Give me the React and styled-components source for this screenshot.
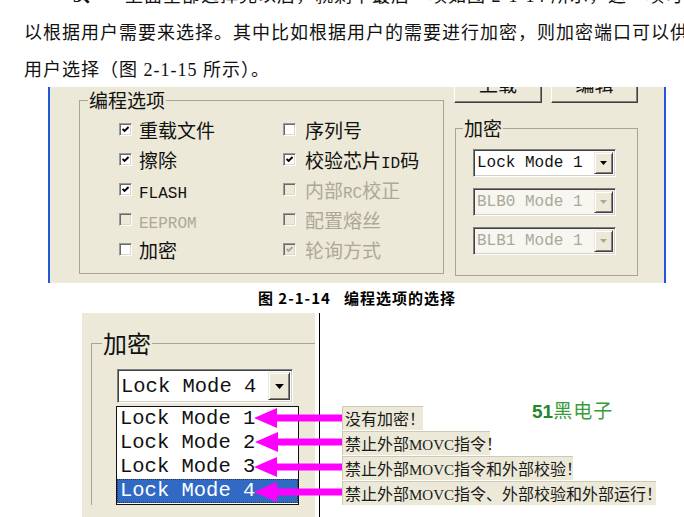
import React from 'react';
import styled, { createGlobalStyle, css } from 'styled-components';

const GlobalStyle = createGlobalStyle`
  html, body { margin: 0; padding: 0; background: #fff; }
  body {
    width: 684px;
    height: 517px;
    overflow: hidden;
    font-family: "Noto Sans CJK SC", sans-serif;
  }
`;

const BEIGE = '#ECE9D8';
const DISABLED = '#ACA899';

const Page = styled.div`
  width: 684px;
  height: 517px;
  overflow: hidden;
  position: relative;
  background: #fff;
  display: flex;
  flex-direction: column;
`;

/* ---------- prose ---------- */
const Prose = styled.div`
  margin-top: -22px;
  font-family: "Liberation Serif", "Noto Sans CJK SC", serif;
  font-size: 18px;
  letter-spacing: 1px;
  color: #111;
`;

const ProseLine = styled.div`
  height: 37px;
  line-height: 37px;
  white-space: nowrap;
  padding-left: 24px;
`;

const ItemNo = styled.span`
  display: inline-block;
  width: 52px;
  margin-left: 49px;
  font-weight: 700;
`;

/* ---------- screenshot 1 ---------- */
const Shot1 = styled.div`
  margin-top: -2px;
  margin-left: 48px;
  width: 618px;
  height: 196px;
  flex: none;
  box-sizing: border-box;
  background: ${BEIGE};
  border-left: 2px solid #2456d8;
  border-right: 2px solid #2456d8;
  display: flex;
  align-items: flex-start;
  gap: 10px;
  padding-left: 29px;
  overflow: hidden;
`;

const Group = styled.fieldset`
  margin: ${p => p.$mt || 0}px 0 0 ${p => p.$ml || 0}px;
  padding: 0;
  min-width: 0;
  flex: none;
  width: ${p => p.$w}px;
  box-sizing: border-box;
  border: 1px solid #a9a594;
  ${p => p.$open && css`
    border-right: none;
    border-bottom: none;
  `}
`;

const Legend = styled.legend`
  margin-left: ${p => p.$ml}px;
  padding: 0 1px;
  font-family: "Noto Sans CJK SC", sans-serif;
  font-size: ${p => p.$fs}px;
  line-height: ${p => p.$lh}px;
  color: #111;
`;

const OptionGrid = styled.div`
  display: grid;
  grid-template-columns: 164px 1fr;
  grid-auto-rows: 30px;
  padding: 4px 0 9px 39px;
`;

const OptionRow = styled.div`
  display: flex;
  align-items: center;
  gap: ${p => p.$gap}px;
  font-size: 19px;
  white-space: nowrap;
  color: ${p => (p.$disabled ? DISABLED : '#111')};
`;

const Latin = styled.span`
  font-family: "Liberation Mono", monospace;
  font-size: 16px;
`;

const CheckBox = styled.span`
  width: 13px;
  height: 13px;
  flex: none;
  box-sizing: border-box;
  border: 1px solid;
  border-color: #9a9a9a #fff #fff #9a9a9a;
  box-shadow: inset 1px 1px 0 #6a6a6a, inset -1px -1px 0 #dcd8c8;
  background: ${p => (p.$disabled ? BEIGE : '#fff')};
  display: flex;
  align-items: center;
  justify-content: center;
`;

const RightCol = styled.div`
  display: flex;
  flex-direction: column;
  width: 184px;
  flex: none;
`;

const ButtonRow = styled.div`
  display: flex;
  gap: 9px;
  margin-top: -20px;
`;

const PushButton = styled.div`
  width: ${p => p.$w}px;
  height: 36px;
  box-sizing: border-box;
  border: 1px solid;
  border-color: #fff #404040 #404040 #fff;
  box-shadow: inset -1px -1px 0 #808080;
  background: ${BEIGE};
  display: flex;
  align-items: center;
  justify-content: center;
  padding-bottom: 3px;
  font-size: 19px;
  color: #111;
`;

const ComboStack = styled.div`
  display: flex;
  flex-direction: column;
  gap: 11px;
  padding: 11px 0 20px 17px;
`;

const ComboBox = styled.div`
  display: flex;
  width: ${p => p.$w}px;
  height: ${p => p.$h}px;
  box-sizing: border-box;
  border: 1px solid;
  border-color: #808080 #fff #fff #808080;
  box-shadow: inset 1px 1px 0 #404040, inset -1px -1px 0 #d4d0c8;
  background: ${p => (p.$disabled ? '#f7f6f1' : '#fff')};
  padding: 2px;
`;

const ComboText = styled.div`
  flex: 1;
  display: flex;
  align-items: center;
  padding-left: ${p => p.$pl}px;
  font-family: "Liberation Mono", monospace;
  font-size: ${p => p.$fs}px;
  white-space: nowrap;
  overflow: hidden;
  color: ${p => (p.$disabled ? DISABLED : '#111')};
`;

const ComboButton = styled.div`
  width: ${p => p.$bw}px;
  flex: none;
  box-sizing: border-box;
  background: ${BEIGE};
  border: 1px solid;
  border-color: ${BEIGE} #404040 #404040 ${BEIGE};
  box-shadow: inset 1px 1px 0 #fff, inset -1px -1px 0 #808080;
  display: flex;
  align-items: center;
  justify-content: center;
`;

/* ---------- caption ---------- */
const Caption = styled.div`
  height: 30px;
  flex: none;
  line-height: 30px;
  text-align: center;
  padding-left: 30px;
  font-family: "Noto Sans CJK SC", sans-serif;
  font-weight: 700;
  font-size: 15px;
  letter-spacing: 1px;
  white-space: pre;
  color: #000;
`;

/* ---------- screenshot 2 ---------- */
const Bottom = styled.div`
  position: relative;
  display: flex;
  height: 204px;
  flex: none;
`;

const Shot2Frame = styled.div`
  margin-left: 82px;
  display: flex;
  padding-right: 4px;
  border-right: 1px solid #000;
`;

const Shot2 = styled.div`
  width: 233px;
  background: ${BEIGE};
  overflow: hidden;
`;

const BigStack = styled.div`
  display: flex;
  flex-direction: column;
  padding: 13px 0 0 25px;
`;

const DropList = styled.div`
  width: 183px;
  margin: 3px 0 0 -1px;
  box-sizing: border-box;
  border: 1px solid #111;
  background: #fff;
  padding-bottom: 1px;
`;

const ListItem = styled.div`
  height: 24px;
  line-height: 24px;
  padding-left: 3px;
  font-family: "Liberation Mono", monospace;
  font-size: 20.5px;
  color: #111;
  white-space: nowrap;
  ${p => p.$selected && css`
    background: #316AC5;
    color: #fff;
    outline: 1px dotted #333;
    outline-offset: -1px;
  `}
`;

const Notes = styled.div`
  display: grid;
  grid-template-columns: 190px auto;
  grid-auto-rows: 24px;
  row-gap: 1px;
  align-content: start;
  padding-top: 93px;
  margin-left: 22px;
`;

const Note = styled.div`
  grid-column: ${p => (p.$full ? '1 / -1' : 'auto')};
  width: ${p => p.$w}px;
  box-sizing: border-box;
  background: ${BEIGE};
  border-top: 1px solid #cdc9b6;
  border-left: 1px solid #cdc9b6;
  padding-left: 2px;
  font-family: "Noto Sans CJK SC", sans-serif;
  font-size: 16px;
  line-height: 23px;
  white-space: nowrap;
  color: #1a1a1a;
`;

const NoteLatin = styled.span`
  font-family: "Liberation Serif", serif;
  font-size: 15px;
`;

const Brand = styled.div`
  align-self: start;
  margin-top: -6px;
  line-height: 20px;
  font-size: 19px;
  white-space: nowrap;
`;

const BrandNum = styled.span`
  font-family: "Liberation Sans", sans-serif;
  font-weight: 700;
  color: #23862a;
`;

const BrandText = styled.span`
  font-family: "Noto Sans CJK SC", sans-serif;
  color: #3b9b3b;
  letter-spacing: 1px;
`;

const ArrowLayer = styled.svg`
  position: absolute;
  left: 250px;
  top: 0;
  pointer-events: none;
`;

/* ---------- pieces ---------- */
function Check({ color }) {
  return (
    <svg width="7" height="7" viewBox="0 0 7 7">
      <path d="M0.6 3 L2.6 5 L6.6 1" fill="none" stroke={color} strokeWidth="1.9" />
    </svg>
  );
}

function Option({ children, checked, disabled, gap = 7 }) {
  return (
    <OptionRow $disabled={disabled} $gap={gap}>
      <CheckBox $disabled={disabled}>{checked && <Check color={disabled ? DISABLED : '#000'} />}</CheckBox>
      <span>{children}</span>
    </OptionRow>
  );
}

function DownArrow({ color, w = 7, h = 4 }) {
  return (
    <svg width={w} height={h} viewBox="0 0 7 4">
      <polygon points="0,0 7,0 3.5,4" fill={color} />
    </svg>
  );
}

function Combo({ text, disabled, w, h, fs, bw, pl }) {
  return (
    <ComboBox $w={w} $h={h} $disabled={disabled}>
      <ComboText $fs={fs} $pl={pl} $disabled={disabled}>{text}</ComboText>
      <ComboButton $bw={bw}>
        <DownArrow color={disabled ? DISABLED : '#000'} w={bw > 20 ? 9 : 7} h={bw > 20 ? 5 : 4} />
      </ComboButton>
    </ComboBox>
  );
}

function Arrow({ cy, tip }) {
  const back = tip + 23;
  const end = 92;
  return (
    <polygon
      points={`${tip},${cy} ${back},${cy - 10} ${back},${cy - 3.5} ${end},${cy - 3.5} ${end},${cy + 3.5} ${back},${cy + 3.5} ${back},${cy + 10}`}
      fill="#FF00FF"
    />
  );
}

export default function App() {
  return (
    <Page>
      <GlobalStyle />
      <Prose>
        <ProseLine>
          <ItemNo>3、</ItemNo>上面全部选择完以后，就剩下最后一项如图 2-1-14 所示，这一项可
        </ProseLine>
        <ProseLine>以根据用户需要来选择。其中比如根据用户的需要进行加密，则加密端口可以供</ProseLine>
        <ProseLine>用户选择（图 2-1-15 所示）。</ProseLine>
      </Prose>

      <Shot1>
        <Group $w={365} $mt={3}>
          <Legend $ml={8} $fs={19} $lh={20}>编程选项</Legend>
          <OptionGrid>
            <Option checked>重载文件</Option>
            <Option gap={9}>序列号</Option>
            <Option checked>擦除</Option>
            <Option checked gap={9}>校验芯片<Latin>ID</Latin>码</Option>
            <Option checked><Latin>FLASH</Latin></Option>
            <Option disabled gap={9}>内部<Latin>RC</Latin>校正</Option>
            <Option disabled><Latin>EEPROM</Latin></Option>
            <Option disabled gap={9}>配置熔丝</Option>
            <Option>加密</Option>
            <Option checked disabled gap={9}>轮询方式</Option>
          </OptionGrid>
        </Group>

        <RightCol>
          <ButtonRow>
            <PushButton $w={88}>上载</PushButton>
            <PushButton $w={87}>编辑</PushButton>
          </ButtonRow>
          <Group $w={183} $mt={15} $ml={1}>
            <Legend $ml={7} $fs={19} $lh={20}>加密</Legend>
            <ComboStack>
              <Combo text="Lock Mode 1" w={143} h={28} fs={16} bw={19} pl={1} />
              <Combo text="BLB0 Mode 1" disabled w={143} h={28} fs={16} bw={19} pl={1} />
              <Combo text="BLB1 Mode 1" disabled w={143} h={28} fs={16} bw={19} pl={1} />
            </ComboStack>
          </Group>
        </RightCol>
      </Shot1>

      <Caption>{'图 2-1-14   编程选项的选择'}</Caption>

      <Bottom>
        <Shot2Frame>
          <Shot2>
            <Group $w={260} $mt={17} $ml={9} $open>
              <Legend $ml={10} $fs={24} $lh={26}>加密</Legend>
              <BigStack>
                <Combo text="Lock Mode 4" w={176} h={34} fs={20.5} bw={22} pl={1} />
                <DropList>
                  <ListItem>Lock Mode 1</ListItem>
                  <ListItem>Lock Mode 2</ListItem>
                  <ListItem>Lock Mode 3</ListItem>
                  <ListItem $selected>Lock Mode 4</ListItem>
                </DropList>
              </BigStack>
            </Group>
          </Shot2>
        </Shot2Frame>

        <Notes>
          <Note $w={81}>没有加密！</Note>
          <Brand>
            <BrandNum>51</BrandNum>
            <BrandText>黑电子</BrandText>
          </Brand>
          <Note $full $w={148}>禁止外部<NoteLatin>MOVC</NoteLatin>指令！</Note>
          <Note $full $w={231}>禁止外部<NoteLatin>MOVC</NoteLatin>指令和外部校验！</Note>
          <Note $full $w={314}>禁止外部<NoteLatin>MOVC</NoteLatin>指令、外部校验和外部运行！</Note>
        </Notes>

        <ArrowLayer width="95" height="204" viewBox="0 0 95 204">
          <Arrow cy={105} tip={4} />
          <Arrow cy={129} tip={5} />
          <Arrow cy={154} tip={4} />
          <Arrow cy={179} tip={4} />
        </ArrowLayer>
      </Bottom>
    </Page>
  );
}
